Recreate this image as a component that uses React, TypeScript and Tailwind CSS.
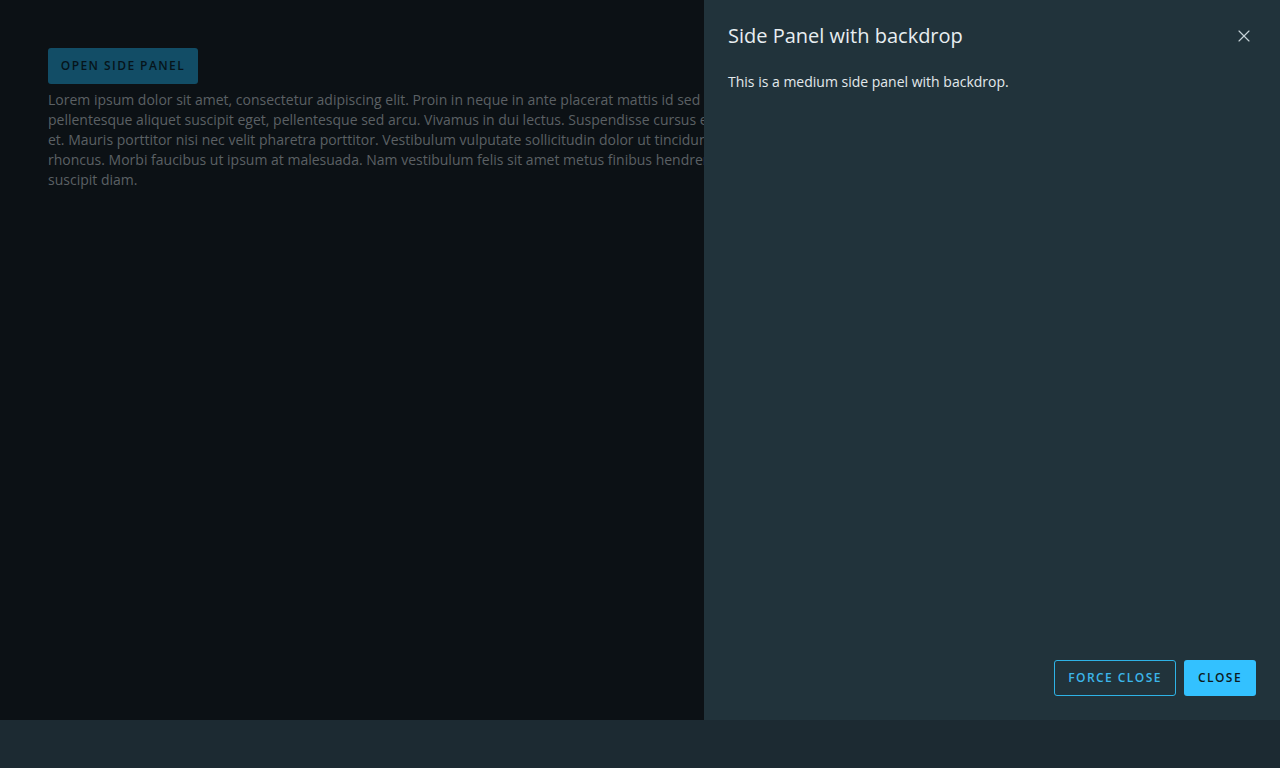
import { X } from "lucide-react";

const lorem =
  "Lorem ipsum dolor sit amet, consectetur adipiscing elit. Proin in neque in ante placerat mattis id sed quam. Proin rhoncus lacus et tempor dignissim. Vivamus sem quam, pellentesque aliquet suscipit eget, pellentesque sed arcu. Vivamus in dui lectus. Suspendisse cursus est ac nisl imperdiet viverra. Aenean sagittis nibh lacus, in eleifend urna ultrices et. Mauris porttitor nisi nec velit pharetra porttitor. Vestibulum vulputate sollicitudin dolor ut tincidunt. Phasellus vitae blandit felis. Nullam posuere ipsum tincidunt velit pellentesque rhoncus. Morbi faucibus ut ipsum at malesuada. Nam vestibulum felis sit amet metus finibus hendrerit. Fusce faucibus odio eget ex vulputate rhoncus. Fusce nec aliquam leo, in suscipit diam.";

export default function App() {
  return (
    <div
      className="w-[1280px] h-[768px] bg-[#1c2a32] overflow-hidden"
      style={{ fontFamily: "'Open Sans', 'Noto Sans', sans-serif" }}
    >
      <div className="relative h-[720px] overflow-hidden">
        {/* page content (dimmed by backdrop) */}
        <div className="h-full bg-[#0c1115] p-12">
          <button className="h-9 w-[150px] rounded-[3px] bg-[#124d66] text-[12px] font-semibold tracking-[0.12em] text-[#06141a]">
            OPEN SIDE PANEL
          </button>
          <p className="mt-[6px] w-[1184px] text-[14px] leading-5 text-[#5b6064]">{lorem}</p>
        </div>

        {/* side panel */}
        <div className="absolute top-0 right-0 w-[576px] h-full bg-[#21333b] flex flex-col">
          <div className="flex items-center justify-between pl-6 pr-[26px] pt-[22px]">
            <h2 className="text-[20px] leading-7 text-[#e8eef1]">Side Panel with backdrop</h2>
            <button className="text-[#c5d1d6]" aria-label="Close">
              <X size={20} strokeWidth={1.4} />
            </button>
          </div>
          <p className="px-6 mt-[22px] text-[14px] leading-5 text-[#e3e9ec]">
            This is a medium side panel with backdrop.
          </p>
          <div className="mt-auto flex justify-end gap-2 px-6 pb-6">
            <button className="h-9 w-[122px] rounded-[3px] border border-[#2eb3e6] text-[12px] font-semibold tracking-[0.12em] text-[#3cb6ea]">
              FORCE CLOSE
            </button>
            <button className="h-9 w-[72px] rounded-[3px] bg-[#33c1ff] text-[12px] font-semibold tracking-[0.12em] text-[#0d1a20]">
              CLOSE
            </button>
          </div>
        </div>
      </div>
    </div>
  );
}
